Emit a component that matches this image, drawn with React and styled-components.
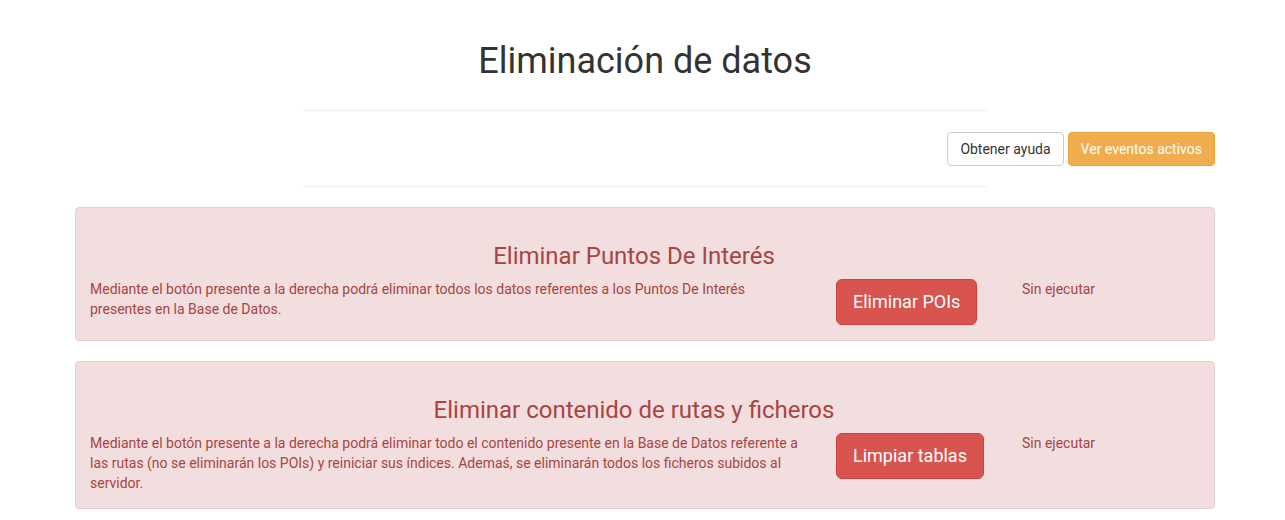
import React from "react";
import styled, { createGlobalStyle } from "styled-components";

const GlobalStyle = createGlobalStyle`
  * { box-sizing: border-box; }
  body {
    margin: 0;
    background: #fff;
    font-family: Roboto, "Liberation Sans", sans-serif;
    font-size: 14px;
    line-height: 20px;
    color: #333;
  }
`;

const Page = styled.div`
  padding: 0 70px 0 75px;
`;

const Container = styled.div`
  width: 1140px;
  margin: 0 auto;
`;

const Title = styled.h1`
  margin: 41px 0 0;
  font-size: 36px;
  font-weight: 400;
  line-height: 40px;
  text-align: center;
  color: #333;
`;

const Rule = styled.hr`
  width: 684px;
  margin: ${(p) => p.$top || 0}px auto 0;
  border: 0;
  border-top: 1px solid #eee;
`;

const Toolbar = styled.div`
  display: flex;
  justify-content: flex-end;
  gap: 4px;
  margin: 21px 0 20px;
`;

const Button = styled.button`
  font-family: inherit;
  font-size: ${(p) => (p.$large ? "18px" : "14px")};
  line-height: ${(p) => (p.$large ? "24px" : "20px")};
  padding: ${(p) => (p.$large ? "10px 16px" : "6px 12px")};
  border-radius: ${(p) => (p.$large ? "6px" : "4px")};
  border: 1px solid ${(p) => p.$border};
  background: ${(p) => p.$bg};
  color: ${(p) => p.$color};
  cursor: pointer;
  white-space: nowrap;
`;

const Alert = styled.section`
  margin-top: 20px;
  padding: 15px 15px 15px 14px;
  border: 1px solid #ebccd1;
  border-radius: 4px;
  background: #f2dede;
  color: #a94442;
`;

const AlertTitle = styled.h3`
  margin: 20px 0 10px;
  padding-right: 21px;
  font-size: 24px;
  font-weight: 400;
  line-height: 26px;
  text-align: center;
  color: #a94442;
`;

const Row = styled.div`
  display: flex;
  align-items: flex-start;
`;

const Description = styled.p`
  flex: 0 0 718px;
  margin: 0;
`;

const ActionCol = styled.div`
  flex: 0 0 214px;
  padding-left: 28px;
`;

const Status = styled.span`
  color: #a94442;
`;

const sections = [
  {
    title: "Eliminar Puntos De Interés",
    text: "Mediante el botón presente a la derecha podrá eliminar todos los datos referentes a los Puntos De Interés presentes en la Base de Datos.",
    action: "Eliminar POIs",
  },
  {
    title: "Eliminar contenido de rutas y ficheros",
    text: "Mediante el botón presente a la derecha podrá eliminar todo el contenido presente en la Base de Datos referente a las rutas (no se eliminarán los POIs) y reiniciar sus índices. Ademaś, se eliminarán todos los ficheros subidos al servidor.",
    action: "Limpiar tablas",
  },
];

export default function App() {
  return (
    <>
      <GlobalStyle />
      <Page>
        <Container>
          <Title>Eliminación de datos</Title>
          <Rule $top={29} />
          <Toolbar>
            <Button $bg="#fff" $border="#ccc" $color="#333">
              Obtener ayuda
            </Button>
            <Button $bg="#f0ad4e" $border="#eea236" $color="#fff">
              Ver eventos activos
            </Button>
          </Toolbar>
          <Rule />
          {sections.map((s) => (
            <Alert key={s.action}>
              <AlertTitle>{s.title}</AlertTitle>
              <Row>
                <Description>{s.text}</Description>
                <ActionCol>
                  <Button $large $bg="#d9534f" $border="#d43f3a" $color="#fff">
                    {s.action}
                  </Button>
                </ActionCol>
                <Status>Sin ejecutar</Status>
              </Row>
            </Alert>
          ))}
        </Container>
      </Page>
    </>
  );
}
